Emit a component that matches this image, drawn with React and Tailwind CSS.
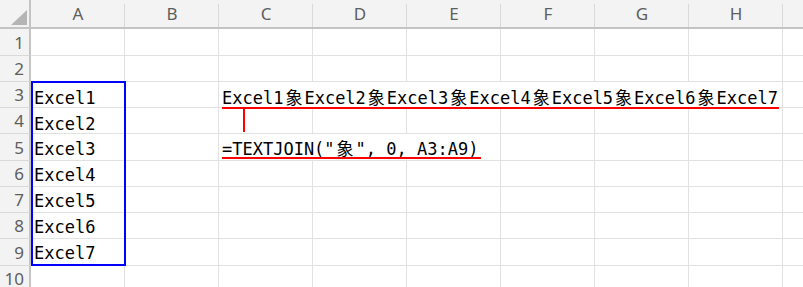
import React from 'react'

const COLS = ['A', 'B', 'C', 'D', 'E', 'F', 'G', 'H', 'I']
const ROW_HEIGHTS = [27, 26, 26, 26, 27, 26, 26, 26, 27, 26]
const ROW_PAD = { 5: 'pb-[2px]', 6: 'pb-[2px]', 7: 'pb-[2px]', 8: 'pb-[2px]', 9: 'pb-[3px]' }
const SEP = '象'

const mono = { fontFamily: '"DejaVu Sans Mono", "Liberation Mono", monospace' }

const Cjk = () => (
    <span
        className="inline-block w-[21px] text-center text-[17px]"
        style={{ fontFamily: '"Noto Sans CJK JP", "Noto Sans CJK SC", sans-serif' }}
    >
        {SEP}
    </span>
)

const joined = (
    <>
        {[1, 2, 3, 4, 5, 6, 7].map(n => (
            <React.Fragment key={n}>
                {n > 1 && <Cjk />}
                {`Excel${n}`}
            </React.Fragment>
        ))}
    </>
)

const formula = (
    <>
        {'=TEXTJOIN("'}<Cjk />{'", 0, A3:A9)'}
    </>
)

const cellContent = (row, col) => {
    if (col === 0 && row >= 3 && row <= 9) return `Excel${row - 2}`
    if (row === 3 && col === 2) return joined
    if (row === 5 && col === 2) return formula
    return null
}

// overflowing text hides the gridline on its right
const hideRight = (row, col) => {
    if (row === 3 && col >= 2 && col <= 6) return true
    if (row === 5 && col >= 2 && col <= 3) return true
    return false
}

export default function App() {
    return (
        <div className="relative w-[803px] h-[287px] overflow-hidden bg-white">
            {/* column headers */}
            <div className="flex h-[29px] bg-[#f3f3f3] border-b-2 border-[#c4c4c4]">
                <div className="w-[31px] shrink-0 border-r-2 border-[#c4c4c4] flex items-end justify-end pr-[2px] pb-[2px]">
                    <div className="w-[16px] h-[15px] bg-[#b5b5b5] [clip-path:polygon(100%_0,100%_100%,0_100%)]" />
                </div>
                {COLS.map(c => (
                    <div
                        key={c}
                        className="w-[94px] shrink-0 flex items-center justify-center text-[17px] text-[#5e5e5e] relative"
                        style={{ fontFamily: '"Noto Sans", "Open Sans", sans-serif' }}
                    >
                        {c !== 'I' && c}
                        <div className="absolute right-0 top-[4px] bottom-0 w-px bg-[#d9d9d9]" />
                    </div>
                ))}
            </div>

            {/* rows */}
            {ROW_HEIGHTS.map((h, i) => {
                const row = i + 1
                return (
                    <div key={row} className="flex" style={{ height: h }}>
                        <div
                            className="w-[31px] shrink-0 bg-[#f3f3f3] border-r-2 border-b border-r-[#c4c4c4] border-b-[#d9d9d9] flex items-center justify-end pr-[5px] pt-[1px] text-[17px] text-[#5e5e5e]"
                            style={{ fontFamily: '"Noto Sans", "Open Sans", sans-serif' }}
                        >
                            {row}
                        </div>
                        {COLS.map((c, ci) => {
                            const content = cellContent(row, ci)
                            return (
                                <div
                                    key={c}
                                    className={`w-[94px] shrink-0 border-b border-[#e1e1e1] flex items-end pl-[3px] ${hideRight(row, ci) ? '' : 'border-r'} ${ROW_PAD[row] || ''}`}
                                >
                                    {content && (
                                        <span
                                            className="whitespace-nowrap text-[17px] leading-[18px] text-black relative z-10"
                                            style={mono}
                                        >
                                            {content}
                                        </span>
                                    )}
                                </div>
                            )
                        })}
                    </div>
                )
            })}

            {/* selection outline */}
            <div className="absolute left-[31px] top-[81px] w-[95px] h-[185px] border-2 border-[#0000ff] z-20" />

            {/* red annotations */}
            <div className="absolute left-[222px] top-[107px] w-[557px] h-[2px] bg-[#ff0000] z-20" />
            <div className="absolute left-[243px] top-[109px] w-[2px] h-[23px] bg-[#ff0000] z-20" />
            <div className="absolute left-[222px] top-[157px] w-[259px] h-[2px] bg-[#ff0000] z-20" />
        </div>
    )
}
